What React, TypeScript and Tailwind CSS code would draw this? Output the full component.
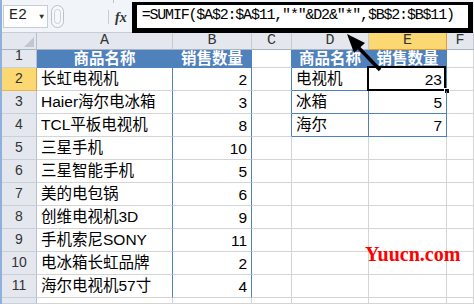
import React from 'react';

const names = [
  '长虹电视机',
  'Haier海尔电冰箱',
  'TCL平板电视机',
  '三星手机',
  '三星智能手机',
  '美的电包锅',
  '创维电视机3D',
  '手机索尼SONY',
  '电冰箱长虹品牌',
  '海尔电视机57寸',
];
const qty = [2, 3, 8, 10, 5, 6, 9, 11, 2, 4];
const lookup: [string, number][] = [
  ['电视机', 23],
  ['冰箱', 5],
  ['海尔', 7],
];

const cell = 'border-r border-b flex items-center overflow-hidden whitespace-nowrap';
const gray = 'border-r-[#d4d4d4] border-b-[#d4d4d4]';
const blueR = 'border-r-[#4f81bd] border-b-[#d4d4d4]';
const blueAll = 'border-r-[#4f81bd] border-b-[#4f81bd]';
const head = 'bg-[#4f81bd] border-r-[#4f81bd] border-b-[#4f81bd] justify-center text-white font-bold';
const rowHead = 'border-r border-b border-r-[#b7c0cc] border-b-[#c9d0d9] bg-[#e4e8ee] flex items-end justify-center pb-[1px] text-[14px] text-[#333]';
const colHead = 'border-r border-b border-r-[#c4cbd4] border-b-[#a9b4c2] bg-[#e4e8ee] flex items-center justify-center text-[15px] text-[#333] font-["Liberation_Mono",monospace]';

export default function App() {
  const rows: React.ReactNode[] = [];

  for (let r = 1; r <= 12; r++) {
    const sel = r === 2;
    rows.push(
      <div
        key={`h${r}`}
        className={
          sel
            ? 'border-r border-b border-r-[#e29b35] border-b-[#e8b458] bg-[#fbd872] flex items-end justify-center pb-[1px] text-[14px] text-[#333]'
            : rowHead
        }
      >
        {r <= 11 ? r : ''}
      </div>
    );

    // A
    if (r === 1) {
      rows.push(<div key={`a${r}`} className={`${cell} ${head}`}>商品名称</div>);
    } else if (r <= 11) {
      rows.push(
        <div key={`a${r}`} className={`${cell} ${blueR} pl-[4px]`}>
          {names[r - 2]}
        </div>
      );
    } else {
      rows.push(<div key={`a${r}`} className={`${cell} ${gray}`} />);
    }

    // B
    if (r === 1) {
      rows.push(<div key={`b${r}`} className={`${cell} ${head}`}>销售数量</div>);
    } else if (r <= 11) {
      rows.push(
        <div key={`b${r}`} className={`${cell} ${blueR} justify-end pr-[4px] pt-[2px]`}>
          {qty[r - 2]}
        </div>
      );
    } else {
      rows.push(<div key={`b${r}`} className={`${cell} ${gray}`} />);
    }

    // C
    rows.push(<div key={`c${r}`} className={`${cell} ${r <= 4 ? blueR : gray}`} />);

    // D
    if (r === 1) {
      rows.push(<div key={`d${r}`} className={`${cell} ${head}`}>商品名称</div>);
    } else if (r <= 4) {
      rows.push(
        <div key={`d${r}`} className={`${cell} ${blueAll} pl-[4px]`}>
          {lookup[r - 2][0]}
        </div>
      );
    } else {
      rows.push(<div key={`d${r}`} className={`${cell} ${gray}`} />);
    }

    // E
    if (r === 1) {
      rows.push(<div key={`e${r}`} className={`${cell} ${head}`}>销售数量</div>);
    } else if (r <= 4) {
      rows.push(
        <div key={`e${r}`} className={`${cell} ${blueAll} justify-end pr-[4px] pt-[2px] relative overflow-visible`}>
          {lookup[r - 2][1]}
          {sel && (
            <>
              <div className="absolute -left-[2px] -top-[2px] w-[79px] h-[25px] border-2 border-black" />
              <div className="absolute -right-[4px] -bottom-[4px] w-[6px] h-[6px] bg-black border border-white" />
            </>
          )}
        </div>
      );
    } else {
      rows.push(<div key={`e${r}`} className={`${cell} ${gray}`} />);
    }

    // F
    rows.push(<div key={`f${r}`} className={`${cell} ${gray}`} />);
  }

  return (
    <div className="relative w-[474px] h-[304px] overflow-hidden bg-white border-l-2 border-l-[#8fb0da] font-['Liberation_Sans','Noto_Sans_CJK_SC',sans-serif] text-[15.5px] text-black">
      {/* formula bar */}
      <div className="relative flex h-[33px] bg-[#f1f4f8] border-b border-b-[#c6cdd6]">
        <div className="absolute left-[111px] top-0 h-[3px] border-l border-[#b9c1cc]" />
        <div className="ml-[1px] mt-[5px] h-[23px] w-[45px] bg-white border border-[#c6cdd6] flex items-center pl-[5px] font-['Liberation_Mono',monospace] text-[15px] text-[#222]">
          E2
          <span className="ml-auto mr-[3px] text-[8px] text-[#333]">▼</span>
        </div>
        <div className="ml-[3px] mt-[5px] h-[23px] w-[13px] rounded-full border border-[#b9c1cc] bg-[#f7f8fa] flex items-center justify-center">
          <div className="w-[7px] h-[15px] rounded-full border border-[#c9d0d9]" />
        </div>
        <div className="ml-[44px] mt-[10px] h-[14px] border-l border-[#c6cdd6]" />
        <div className="ml-[6px] mt-[7px] font-['Liberation_Serif',serif] italic font-bold text-[14px] text-[#333]">
          fx
        </div>
        <div className="ml-[5px] mt-[2px] h-[31px] w-[341px] border-[5px] border-t-[3px] border-black bg-white flex items-center pl-[5px] font-['Liberation_Mono',monospace] text-[15px] tracking-[-1.2px] text-black">
          =SUMIF($A$2:$A$11,"*"&amp;D2&amp;"*",$B$2:$B$11)
        </div>
      </div>

      {/* sheet */}
      <div className="grid grid-cols-[35px_136px_79px_40px_77px_78px_1fr] grid-rows-[17px_18px_repeat(10,23px)_1fr] h-[271px]">
        <div className="border-r border-b border-r-[#b7c0cc] border-b-[#a9b4c2] bg-[#e4e8ee] relative">
          <svg className="absolute right-[2px] bottom-[2px]" width="10" height="10" viewBox="0 0 10 10">
            <polygon points="10,0 10,10 0,10" fill="#c0c7d1" />
          </svg>
        </div>
        <div className={colHead}>A</div>
        <div className={colHead}>B</div>
        <div className={colHead}>C</div>
        <div className={colHead}>D</div>
        <div className="border-r border-b border-r-[#e29b35] border-b-[#e29b35] bg-[#fbd872] flex items-center justify-center text-[15px] text-[#333] font-['Liberation_Mono',monospace]">
          E
        </div>
        <div className={colHead}>F</div>
        {rows}
      </div>

      {/* arrow annotation */}
      <svg className="absolute left-0 top-0 pointer-events-none" width="474" height="304">
        <line x1="378" y1="70" x2="354" y2="45" stroke="black" strokeWidth="3.5" />
        <polygon points="345,34 363,43 352,53" fill="black" />
      </svg>

      {/* watermark */}
      <div className="absolute left-[363px] top-[239px] font-['Liberation_Serif',serif] text-[20px] font-bold text-[#ff0000]">
        Yuucn.com
      </div>
    </div>
  );
}
